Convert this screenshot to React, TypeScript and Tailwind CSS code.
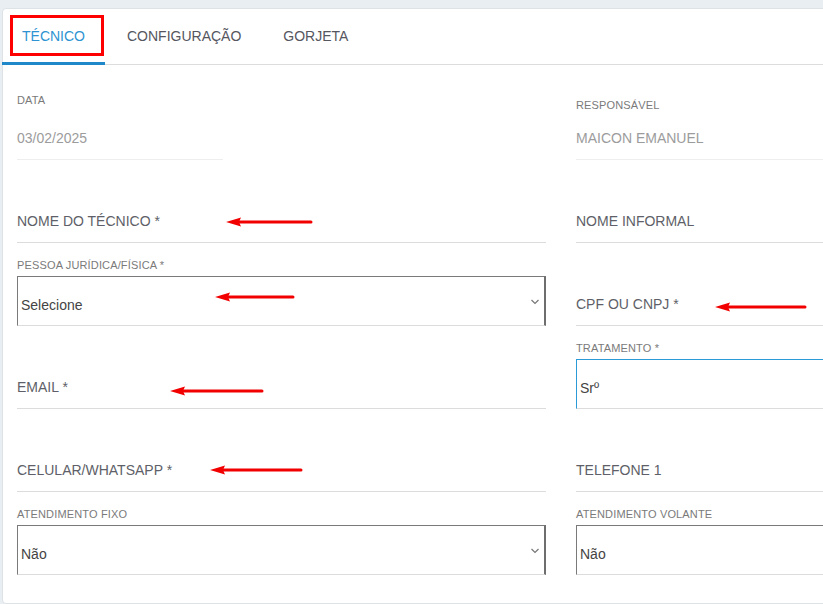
import React from "react";

type FieldProps = {
  label?: string;
  value?: string;
  placeholder?: string;
  kind?: "line" | "readonly" | "select" | "boxed" | "focused";
  labelClass?: string;
  width?: string;
};

function Chevron() {
  return (
    <svg width="10" height="8" viewBox="0 0 10 8" className="absolute right-[4px] top-[21px]">
      <polyline points="1.5,2 5,5.5 8.5,2" fill="none" stroke="#777" strokeWidth="1.2" />
    </svg>
  );
}

function Field({ label, value, placeholder, kind = "line", labelClass = "mb-[4px]", width = "w-full" }: FieldProps) {
  let box = "";
  if (kind === "line") box = "border-b border-[#dcdcdc] pb-[13px]";
  if (kind === "readonly") box = "border-b border-[#eeeeee] pb-[13px]";
  if (kind === "select")
    box = "border-t border-l border-r-2 border-b border-t-[#7a7a7a] border-l-[#7a7a7a] border-r-[#6e6e6e] border-b-[#dcdcdc] pl-[3px] pb-[12px]";
  if (kind === "boxed") box = "border-t border-l border-b border-t-[#7a7a7a] border-l-[#7a7a7a] border-b-[#dcdcdc] pl-[3px] pb-[12px]";
  if (kind === "focused") box = "border-t border-l border-b border-t-[#2b9ad6] border-l-[#2b9ad6] border-b-[#dcdcdc] pl-[3px] pb-[12px]";

  const textColor =
    kind === "readonly" ? "text-[#9c9c9c]" : placeholder ? "text-[#5e5f68]" : "text-[#444444]";

  return (
    <div className={`flex h-[83px] flex-col justify-end ${width}`}>
      {label && (
        <div className={`text-[11px] leading-[13px] tracking-[0.15px] text-[#7a7a7a] ${labelClass}`}>{label}</div>
      )}
      <div className={`relative flex h-[50px] items-end text-[14px] leading-[16px] ${box} ${textColor}`}>
        <span>{placeholder ?? value}</span>
        {kind === "select" && <Chevron />}
      </div>
    </div>
  );
}

function Arrow({ x1, x2, y }: { x1: number; x2: number; y: number }) {
  // x1 is the tip of the head, x2 the tail
  return (
    <g>
      <line x1={x1 + 12} y1={y} x2={x2} y2={y} stroke="#f20000" strokeWidth="3" strokeLinecap="round" />
      <polygon points={`${x1},${y} ${x1 + 15},${y - 4.5} ${x1 + 13},${y} ${x1 + 15},${y + 4.5}`} fill="#f20000" />
    </g>
  );
}

export default function App() {
  const tabs = ["TÉCNICO", "CONFIGURAÇÃO", "GORJETA"];
  return (
    <div
      className="relative h-[604px] w-[823px] overflow-hidden bg-[#e9eef2]"
      style={{ fontFamily: '"Liberation Sans", Arial, sans-serif' }}
    >
      <div className="ml-[2px] mt-[8px] w-[1122px] rounded-[4px] border border-[#dde2e7] bg-white">
        {/* tab strip */}
        <div className="-ml-px flex h-[56px] gap-[2px] border-b border-[#dcdcdc]">
          {tabs.map((t, i) => (
            <div
              key={t}
              className={`-mb-px flex items-center px-[20px] pt-[1px] text-[14px] ${
                i === 0 ? "border-b-[3px] border-[#1e88c9] text-[#2d93d2]" : "border-b-[3px] border-transparent text-[#555660]"
              }`}
            >
              {t}
            </div>
          ))}
        </div>

        {/* form */}
        <div className="grid grid-cols-[529px_529px] gap-x-[30px] pb-[28px] pl-[14px] pt-[12px]">
          <Field label="DATA" value="03/02/2025" kind="readonly" width="w-[206px]" labelClass="mb-[3px]" />
          <Field label="RESPONSÁVEL" value="MAICON EMANUEL" kind="readonly" labelClass="-mb-[2px]" />

          <Field placeholder="NOME DO TÉCNICO *" />
          <Field placeholder="NOME INFORMAL" />

          <Field label="PESSOA JURÍDICA/FÍSICA *" value="Selecione" kind="select" />
          <Field placeholder="CPF OU CNPJ *" />

          <Field placeholder="EMAIL *" />
          <Field label="TRATAMENTO *" value="Srº" kind="focused" />

          <Field placeholder="CELULAR/WHATSAPP *" />
          <Field placeholder="TELEFONE 1" />

          <Field label="ATENDIMENTO FIXO" value="Não" kind="select" />
          <Field label="ATENDIMENTO VOLANTE" value="Não" kind="boxed" />
        </div>
      </div>

      {/* highlight box around the active tab */}
      <div className="pointer-events-none absolute left-[10px] top-[15px] h-[41px] w-[94px] border-[3px] border-[#ff0000]" />

      {/* callout arrows */}
      <svg className="pointer-events-none absolute left-0 top-0" width="823" height="604">
        <Arrow x1={226} x2={311} y={222} />
        <Arrow x1={215} x2={293} y={297} />
        <Arrow x1={715} x2={805} y={307} />
        <Arrow x1={170} x2={262} y={391} />
        <Arrow x1={210} x2={301} y={470} />
      </svg>
    </div>
  );
}
